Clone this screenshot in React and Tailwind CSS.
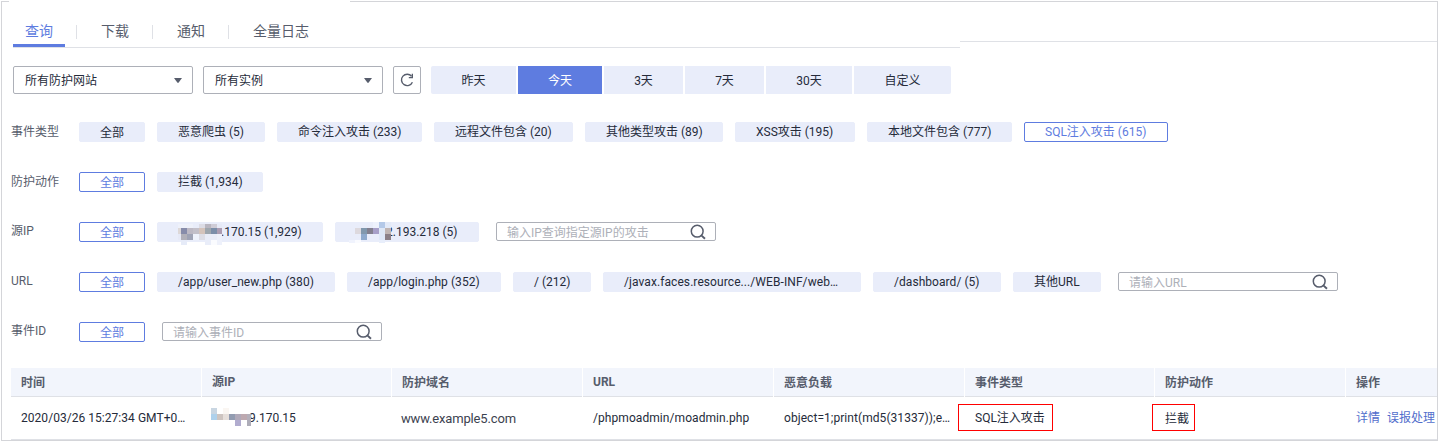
const MOSAIC_A = [
  [178, 224, 15, 4, '#eef1fa'], [199, 224, 6, 4, '#dcdce5'], [205, 224, 6, 4, '#b9b6c0'], [211, 224, 6, 4, '#cfccd6'], [217, 224, 5, 4, '#e6eaf7'],
  [178, 228, 3, 6, '#ddd8d8'], [181, 228, 6, 6, '#878caa'], [187, 228, 6, 6, '#bdb9c4'], [193, 228, 6, 6, '#c3c0c9'],
  [199, 228, 6, 6, '#d4c3bb'], [205, 228, 6, 6, '#9ea6ae'], [211, 228, 6, 6, '#7b8ea9'], [217, 228, 5, 6, '#ab9cb2'],
  [178, 234, 3, 6, '#e6e9f6'], [181, 234, 6, 6, '#b1b0b9'], [187, 234, 6, 6, '#9fa3b5'], [193, 234, 6, 6, '#eff2fb'], [199, 234, 6, 6, '#dddde6'], [205, 234, 12, 6, '#e9ecf8'], [217, 234, 5, 6, '#edf0fa'],
  [181, 240, 6, 5, '#e6ebf8'], [205, 240, 6, 5, '#e9edf9'], [211, 240, 6, 5, '#fafbfe'], [217, 240, 5, 5, '#eef1fb'],
]

const MOSAIC_B = [
  [373, 222, 6, 6, '#eef2fc'], [379, 222, 6, 6, '#b4c9e8'], [385, 222, 6, 6, '#e3eaf8'],
  [355, 228, 6, 6, '#ddd9de'], [361, 228, 6, 6, '#8198ad'], [367, 228, 6, 6, '#83808f'], [373, 228, 6, 6, '#a79fc8'], [379, 228, 6, 6, '#dfe8f6'], [385, 228, 6, 6, '#c0b5b3'],
  [361, 234, 6, 6, '#8faacd'], [379, 234, 6, 6, '#dfe8f8'], [385, 234, 6, 6, '#8c8087'],
  [349, 240, 6, 3, '#f0f3fd'], [355, 240, 6, 3, '#fafbff'], [379, 240, 6, 3, '#e8eefb'],
]

const MOSAIC_C = [
  [211, 408, 6, 6, '#c9d6e2'], [223, 408, 6, 6, '#faf6f2'],
  [211, 414, 6, 6, '#aed1ec'], [217, 414, 6, 6, '#cdc4c0'], [223, 414, 6, 6, '#e6dfdb'], [229, 414, 6, 6, '#929cb1'], [235, 414, 6, 6, '#b0a9b9'], [241, 414, 6, 6, '#bda9b0'], [247, 414, 4, 6, '#b3afba'],
  [235, 420, 6, 6, '#b1accf'], [247, 420, 4, 6, '#aeadb9'],
]

function Mosaic({ cells, viewBox, className }) {
  return (
    <svg viewBox={viewBox} className={className} shapeRendering="crispEdges" aria-hidden="true">
      {cells.map(([x, y, w, h, fill]) => (
        <rect key={`${x}-${y}`} x={x} y={y} width={w} height={h} fill={fill} />
      ))}
    </svg>
  )
}

function Tab({ label, active, last }) {
  return (
    <div className="flex">
      <div className={`flex h-[30px] justify-center whitespace-nowrap text-sm leading-[28px] ${active ? 'border-b-3 border-[#5e7ce0] text-[#5e7ce0]' : 'text-[#575d6c]'} ${last ? 'w-[80px]' : 'w-[52px]'}`}>
        {label}
      </div>
      {!last && <div className="mt-2 ml-[11px] mr-[12px] h-[14px] w-px bg-[#dfe1e6]" />}
    </div>
  )
}

function Select({ label }) {
  return (
    <div className="flex h-7 w-[180px] items-center justify-between rounded-xs border border-[#adb0b8] pl-[11px] pr-[10px] text-[#252b3a]">
      <span className="pt-[2px] leading-[24px]">{label}</span>
      <svg width="8" height="5" viewBox="0 0 8 5"><path d="M0 0h8L4.7 4.6a1 1 0 0 1-1.4 0z" fill="#575d6c" /></svg>
    </div>
  )
}

function Chip({ children, width, selected, low }) {
  return (
    <div className={`relative flex h-5 shrink-0 rounded-xs border pl-5 whitespace-pre ${low ? 'leading-[20px]' : 'leading-[18px]'} ${width} ${selected ? 'border-[#5e7ce0] bg-white text-[#5e7ce0]' : 'border-[#e9edfa] bg-[#e9edfa] text-[#252b3a]'}`}>
      {children}
    </div>
  )
}

function Search({ placeholder }) {
  return (
    <div className="ml-[5px] flex h-[19px] w-[220px] justify-between rounded-xs border border-[#adb0b8] pl-[10px] pr-[9px] text-[#adb0b8]">
      <span className="leading-[20px]">{placeholder}</span>
      <svg className="mt-px" width="16" height="16" viewBox="0 0 16 16" fill="none" stroke="#575d6c" strokeWidth="1.5">
        <circle cx="7.2" cy="7.2" r="5.9" />
        <path d="M11.6 11.6 15 14.8" strokeWidth="1.9" />
      </svg>
    </div>
  )
}

function FilterRow({ label, children, lift }) {
  return (
    <div className="flex h-5 gap-3">
      <div className={`w-[56px] text-[#575d6c] ${lift ? 'leading-[18px]' : 'leading-[20px]'}`}>{label}</div>
      {children}
    </div>
  )
}

const RANGES = [
  ['昨天', 'w-[85px] rounded-l-xs'],
  ['今天', 'w-[84px]'],
  ['3天', 'w-[79px]'],
  ['7天', 'w-[79px]'],
  ['30天', 'w-[86px]'],
  ['自定义', 'w-[97px] rounded-r-xs'],
]

const HEADERS = ['时间', '源IP', '防护域名', 'URL', '恶意负载', '事件类型', '防护动作', '操作']
const COLS = 'grid grid-cols-[191px_190px_191px_191px_191px_190px_191px_91px]'

export default function App() {
  return (
    <div className="relative h-[441px] w-[1438px] overflow-hidden bg-white pt-px pl-px font-['Roboto','Noto_Sans_CJK_SC',sans-serif] text-xs text-[#252b3a]">
      <div className="flex h-[440px] flex-col border-r border-b border-l border-[#d4d5d9]">
        <div className="flex h-px justify-between">
          <div className="w-[7px] bg-[#d4d5d9]" />
          <div className="w-[1087px] bg-[#d4d5d9]" />
        </div>

        <div className="flex h-[46px]">
          <div className="flex w-[958px] pl-[11px]">
            <div className="flex flex-1 border-b border-[#dfe1e6] pt-[15px]">
              <Tab label="查询" active />
              <Tab label="下载" />
              <Tab label="通知" />
              <Tab label="全量日志" last />
            </div>
          </div>
          <div className="mt-[39px] h-px flex-1 bg-[#dfe1e6]" />
        </div>

        <div className="mt-[18px] flex gap-[10px] pl-[11px]">
          <Select label="所有防护网站" />
          <Select label="所有实例" />
          <div className="flex size-7 items-center justify-center rounded-xs border border-[#adb0b8]">
            <svg width="14" height="14" viewBox="0 0 14 14" fill="none" stroke="#575d6c" strokeWidth="1.4">
              <path d="M11.6 3.3A5.7 5.7 0 1 0 12.4 9.2" />
              <path d="M13 .8v4.4H8.8V4h2.9V.8z" fill="#575d6c" stroke="none" />
            </svg>
          </div>
          <div className="flex gap-[2px]">
            {RANGES.map(([label, cls]) => (
              <div key={label} className={`h-7 text-center leading-[30px] ${cls} ${label === '今天' ? 'bg-[#5e7ce0] text-white' : 'bg-[#e9edfa]'}`}>{label}</div>
            ))}
          </div>
        </div>

        <div className="mt-7 flex flex-col gap-[30px] pl-[9px]">
          <FilterRow label="事件类型">
            <Chip width="w-[66px]" low>全部</Chip>
            <Chip width="w-[108px]">恶意爬虫 (5)</Chip>
            <Chip width="w-[145px]">命令注入攻击 (233)</Chip>
            <Chip width="w-[139px]">远程文件包含 (20)</Chip>
            <Chip width="w-[138px]">其他类型攻击 (89)</Chip>
            <Chip width="w-[120px]">XSS攻击 (195)</Chip>
            <Chip width="w-[145px]">本地文件包含 (777)</Chip>
            <Chip width="w-[144px]" selected>SQL注入攻击 (615)</Chip>
          </FilterRow>
          <FilterRow label="防护动作">
            <Chip width="w-[66px]" selected low>全部</Chip>
            <Chip width="w-[106px]">拦截 (1,934)</Chip>
          </FilterRow>
          <FilterRow label="源IP" lift>
            <Chip width="w-[66px]" selected low>全部</Chip>
            <Chip width="w-[166px]">
              <span className="pl-[43px]">.170.15 (1,929)</span>
              <Mosaic cells={MOSAIC_A} viewBox="178 224 44 21" className="absolute top-px left-5 h-[21px] w-[44px]" />
            </Chip>
            <Chip width="w-[144px]">
              <span className="pl-[30px]">2.193.218 (5)</span>
              <Mosaic cells={MOSAIC_B} viewBox="349 222 42 21" className="absolute -top-px left-[13px] h-[21px] w-[42px]" />
            </Chip>
            <Search placeholder="输入IP查询指定源IP的攻击" />
          </FilterRow>
          <FilterRow label="URL" lift>
            <Chip width="w-[66px]" selected low>全部</Chip>
            <Chip width="w-[178px]"><span className="tracking-[0.06px]">/app/user_new.php (380)</span></Chip>
            <Chip width="w-[154px]"><span className="tracking-[0.05px]">/app/login.php (352)</span></Chip>
            <Chip width="w-[78px]">/ (212)</Chip>
            <Chip width="w-[258px]"><span className="tracking-[0.08px]">/javax.faces.resource.../WEB-INF/web…</span></Chip>
            <Chip width="w-[128px]"><span className="tracking-[0.05px]">/dashboard/ (5)</span></Chip>
            <Chip width="w-[88px]">其他URL</Chip>
            <Search placeholder="请输入URL" />
          </FilterRow>
          <FilterRow label="事件ID" lift>
            <Chip width="w-[66px]" selected low>全部</Chip>
            <Search placeholder="请输入事件ID" />
          </FilterRow>
        </div>

        <div className="mt-[26px] ml-[9px] flex flex-col">
          <div className={`${COLS} h-[29px] border-b border-[#dfe1e6] bg-[#f2f5fc] font-bold text-[#575d6c]`}>
            {HEADERS.map((h, i) => (
              <div key={h} className={`pl-[10px] ${/[A-Z]/.test(h) ? 'leading-7' : 'leading-[30px]'} ${i < 7 ? 'border-r border-white' : ''}`}>{h}</div>
            ))}
          </div>
          <div className={`${COLS} h-[43px] border-b border-[#dfe1e6] leading-[42px] whitespace-nowrap`}>
            <div className="pl-[10px] tracking-[0.04px]">2020/03/26 15:27:34 GMT+0…</div>
            <div className="relative pl-[47px]">
              9.170.15
              <Mosaic cells={MOSAIC_C} viewBox="211 408 40 18" className="absolute top-[11px] left-[9px] h-[18px] w-[40px]" />
            </div>
            <div className="pl-[9px] text-[13px] leading-[43px] tracking-[-0.16px] text-[#3c4250]">www.example5.com</div>
            <div className="pl-[10px] tracking-[0.07px]">/phpmoadmin/moadmin.php</div>
            <div className="pl-[10px] tracking-[0.06px]">object=1;print(md5(31337));e…</div>
            <div className="pt-[7px]"><div className="-ml-[7px] h-[27px] w-[95px] border border-[#f00] pl-4 leading-[26px]">SQL注入攻击</div></div>
            <div className="pt-[7px]"><div className="-ml-[3px] h-[27px] w-[43px] border border-[#f00] pl-3 leading-[28px]">拦截</div></div>
            <div className="flex gap-[7px] pl-[10px] text-[#526ecc]"><span>详情</span><span>误报处理</span></div>
          </div>
        </div>
      </div>
    </div>
  )
}
